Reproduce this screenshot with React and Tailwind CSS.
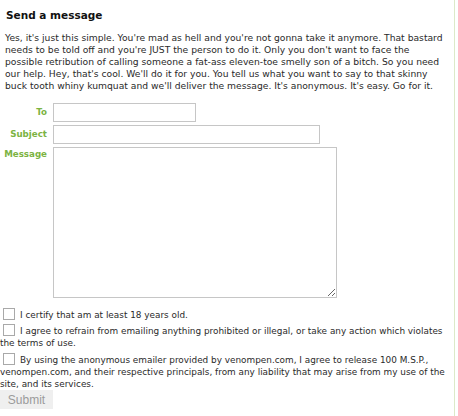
export default function App() {
  const box = "inline-block w-[12px] h-[12px] border border-[#a9a9a9] bg-white align-[-2px] ml-[3px] mr-[5px]";
  return (
    <div className="w-[458px] h-[416px] bg-white overflow-hidden font-['DejaVu_Sans',Verdana,sans-serif] text-[#2a2a2a]">
      <div className="w-[455px] h-[416px] border-r border-[#dce9c8] pl-[5px] pt-[9px]">
        <h2 className="text-[10.5px] leading-[13px] font-bold text-[#111] ml-[1px]">Send a message</h2>
        <p className="text-[9.2px] leading-[12px] mt-[10px] pr-[5px]">
          Yes, it's just this simple. You're mad as hell and you're not gonna take it anymore. That bastard needs to be told off and you're JUST the person to do it. Only you don't want to face the possible retribution of calling someone a fat-ass eleven-toe smelly son of a bitch. So you need our help. Hey, that's cool. We'll do it for you. You tell us what you want to say to that skinny buck tooth whiny kumquat and we'll deliver the message. It's anonymous. It's easy. Go for it.
        </p>

        <div className="-ml-[5px] mt-[11px] flex flex-col gap-[3px] text-[8.7px] font-bold text-[#7cb342]">
          <div className="flex items-center">
            <span className="w-[47px] text-right">To</span>
            <input className="ml-[6px] w-[143px] h-[19px] border border-[#c6c6c6] bg-white" />
          </div>
          <div className="flex items-center">
            <span className="w-[47px] text-right">Subject</span>
            <input className="ml-[6px] w-[267px] h-[19px] border border-[#c6c6c6] bg-white" />
          </div>
          <div className="flex items-start">
            <span className="w-[47px] text-right pt-[1px]">Message</span>
            <textarea className="ml-[6px] w-[284px] h-[151px] border border-[#c6c6c6] bg-white" />
          </div>
        </div>

        <div className="-ml-[5px] mt-[7px] text-[8.9px] leading-[12px] pr-[2px]">
          <p className="pt-[3px]">
            <span className={box}></span>I certify that am at least 18 years old.
          </p>
          <p className="pt-[3px]">
            <span className={box}></span>I agree to refrain from emailing anything prohibited or illegal, or take any action which violates the terms of use.
          </p>
          <p className="pt-[4px]">
            <span className={box}></span>By using the anonymous emailer provided by venompen.com, I agree to release 100 M.S.P., venompen.com, and their respective principals, from any liability that may arise from my use of the site, and its services.
          </p>
          <button className="mt-0 w-[53px] h-[19px] bg-[#efefef] text-[#9b9b9b] text-[12px] font-['Liberation_Sans',Arial,sans-serif]">
            Submit
          </button>
        </div>
      </div>
    </div>
  );
}
